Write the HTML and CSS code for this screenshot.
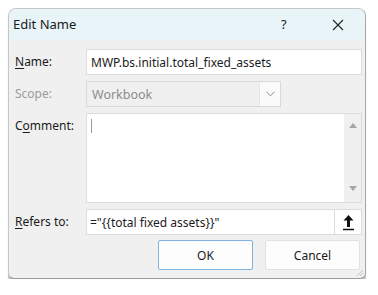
FILE: index.html
```html
<!DOCTYPE html>
<html lang="en">
<head>
<meta charset="UTF-8">
<title>Edit Name</title>
<link rel="stylesheet" href="styles.css">
</head>
<body>

<div class="dialog">
  <div class="titlebar">
    <span class="title">Edit Name</span>
    <span class="help">?</span>
    <span class="close">
      <svg width="12" height="12" viewBox="0 0 12 12"><path d="M1 1 L11 11 M11 1 L1 11" stroke="#222" stroke-width="1.1" fill="none"/></svg>
    </span>
  </div>

  <div class="content">
    <div class="row">
      <label class="label"><u>N</u>ame:</label>
      <div class="field">MWP.bs.initial.total_fixed_assets</div>
    </div>

    <div class="row">
      <label class="label disabled">Scope:</label>
      <div class="select">
        <span class="select-text">Workbook</span>
        <span class="select-btn">
          <svg width="9" height="6" viewBox="0 0 9 6"><path d="M0.5 0.8 L4.5 4.8 L8.5 0.8" stroke="#8a8a8a" stroke-width="1" fill="none"/></svg>
        </span>
      </div>
    </div>

    <div class="row row-comment">
      <label class="label">C<u>o</u>mment:</label>
      <div class="textarea">
        <span class="caret"></span>
        <div class="scrollbar">
          <svg width="8" height="5" viewBox="0 0 8 5"><path d="M0 5 L4 0 L8 5 Z" fill="#a6a6a6"/></svg>
          <svg width="8" height="5" viewBox="0 0 8 5"><path d="M0 0 L4 5 L8 0 Z" fill="#a6a6a6"/></svg>
        </div>
      </div>
    </div>

    <div class="row">
      <label class="label"><u>R</u>efers to:</label>
      <div class="refers">
        <div class="field refers-text">="{{total fixed assets}}"</div>
        <span class="collapse-btn">
          <svg width="13" height="17" viewBox="0 0 13 17"><path d="M6.5 1 L1.5 6.5 H5 V13 H8 V6.5 H11.5 Z" fill="#111"/><path d="M1 15.5 H12" stroke="#111" stroke-width="1.3"/></svg>
        </span>
      </div>
    </div>

    <div class="buttons">
      <button class="btn btn-default">OK</button>
      <button class="btn">Cancel</button>
    </div>
  </div>

  <svg class="grip" width="10" height="10" viewBox="0 0 10 10"><path d="M9 3 L3 9 M9 6 L6 9" stroke="#c4c4c4" stroke-width="1"/></svg>
</div>

</body>
</html>
```

FILE: styles.css
```css
body {
    margin: 0;
    background: #ffffff;
    font-family: "Noto Sans", "Open Sans", sans-serif;
    font-size: 12px;
    color: #1b1b1b;
}
.dialog {
    position: relative;
    margin: 8px 0 0 8px;
    width: 356px;
    height: 269px;
    background: #f0f0f0;
    border: 1px solid #c6c6c6;
    border-right-color: #a8a8a8;
    border-bottom-color: #9c9c9c;
    border-radius: 8px 8px 6px 6px;
    box-shadow: 0 4px 1px rgba(0, 0, 0, 0.25);
    overflow: hidden;
}
.titlebar {
    display: flex;
    align-items: center;
    height: 31px;
    background: #e8f4f7;
    padding-left: 4px;
}
.title {
    font-size: 13px;
    flex: 1;
    padding-bottom: 2px;
}
.help {
    font-size: 13px;
    width: 8px;
    margin-right: 43px;
    padding-bottom: 2px;
}
.close {
    display: flex;
    width: 12px;
    margin-right: 21px;
}
.content {
    display: flex;
    flex-direction: column;
    gap: 6px;
    padding: 9px 3px 0 6px;
}
.row {
    display: flex;
    height: 26px;
}
.row-comment {
    height: 90px;
}
.label {
    width: 71px;
    padding-top: 4px;
}
.label u {
    text-underline-offset: 2px;
}
.disabled {
    color: #9b9b9b;
}
.field {
    flex: 1;
    background: #ffffff;
    border: 1px solid #dcdcdc;
    padding: 4px 4px 0;
    white-space: nowrap;
    overflow: hidden;
}
.select {
    display: flex;
    width: 193px;
    border: 1px solid #d9d9d9;
    background: #f0f0f0;
    color: #8c8c8c;
    font-size: 12.5px;
}
.select-text {
    flex: 1;
    padding: 4px 5px 0;
}
.select-btn {
    display: flex;
    align-items: center;
    justify-content: center;
    width: 20px;
    background: #fafafa;
    border-left: 1px solid #e6e6e6;
}
.textarea {
    position: relative;
    flex: 1;
    background: #ffffff;
    border: 1px solid #dcdcdc;
}
.caret {
    position: absolute;
    left: 4px;
    top: 5px;
    width: 1px;
    height: 14px;
    background: #9a9a9a;
}
.scrollbar {
    display: flex;
    flex-direction: column;
    justify-content: space-between;
    align-items: center;
    position: absolute;
    right: 0;
    top: 0;
    bottom: 0;
    width: 17px;
    padding: 9px 0 11px;
    box-sizing: border-box;
    background: #f0f0f0;
}
.refers {
    display: flex;
    flex: 1;
}
.refers-text {
    padding-left: 3px;
}
.collapse-btn {
    display: flex;
    align-items: center;
    justify-content: center;
    width: 26px;
    background: #ffffff;
    border: 1px solid #dcdcdc;
    border-left: none;
}
.buttons {
    display: flex;
    justify-content: flex-end;
    gap: 12px;
    margin-top: -1px;
    padding-right: 2px;
}
.btn {
    width: 95px;
    height: 30px;
    font-family: "Noto Sans", "Open Sans", sans-serif;
    font-size: 12px;
    color: #1b1b1b;
    background: #fdfdfd;
    border: 1px solid #e2e2e2;
    border-radius: 2px;
}
.btn-default {
    border-color: #7fb3e0;
}
.grip {
    position: absolute;
    right: 1px;
    bottom: 1px;
}
```
